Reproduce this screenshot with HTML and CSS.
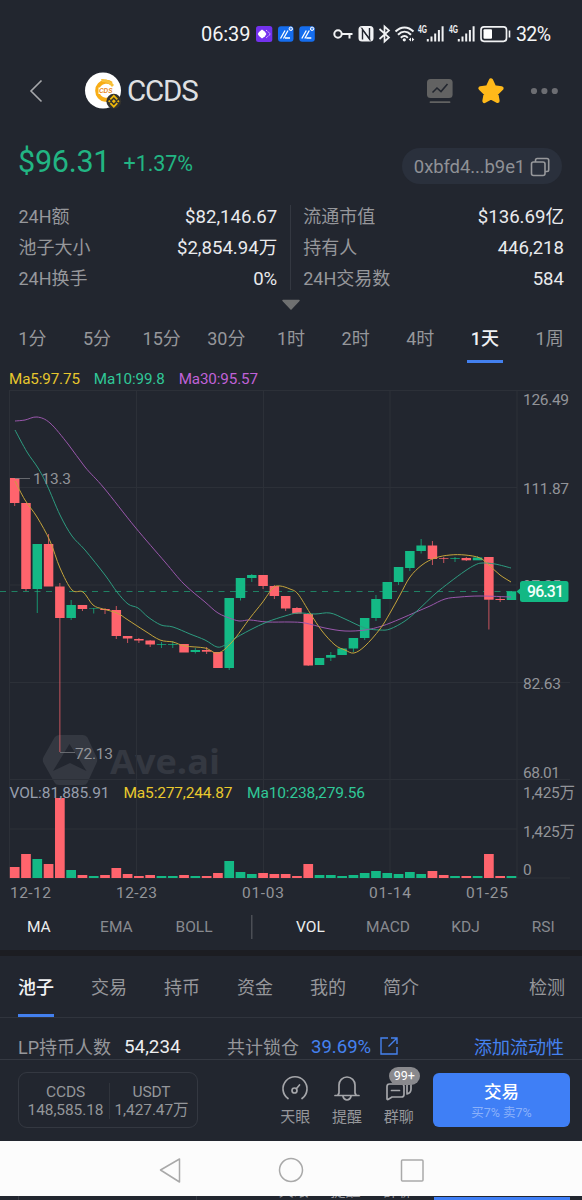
FILE: index.html
```html
<!DOCTYPE html>
<html lang="zh-CN">
<head>
<meta charset="utf-8">
<title>CCDS</title>
<link rel="stylesheet" href="styles.css">
</head>
<body>
<div class="phone">
  <div class="status">
    <span class="clock">06:39</span>
    <svg class="app-icons" width="60" height="18" viewBox="256 25 60 18">
      <rect x="256" y="26" width="16.3" height="16" rx="2.5" fill="#7432ee"/>
      <path d="M262 29.5l3 2.2 1.4 2.3-1.4 2.3-3 2.2-3-2.4-1.2-2.1 1.2-2.1z" fill="#fff"/>
      <path d="M266 30l4.500 4-4.500 4" fill="none" stroke="#d9c4ff" stroke-width="1" stroke-dasharray="1.500 .7"/>
      <g id="trade">
        <rect x="278" y="26.300" width="15.500" height="15.500" rx="3" fill="#156dee"/>
        <path d="M280.500 38.500l4.500-8M283.500 38.500l4.500-8M285 38h5" stroke="#fff" stroke-width="1.300" fill="none"/>
        <circle cx="290.800" cy="28.800" r="1.700" fill="#4c8cf0" stroke="#fff" stroke-width="1"/>
      </g>
      <use href="#trade" x="21.300"/>
    </svg>
    <svg class="sys-icons" width="178" height="20" viewBox="333 24 178 20" fill="none" stroke="#f1f2f4">
      <circle cx="338" cy="34" r="3.700" stroke-width="2"/>
      <path d="M342 34h10.500M349.500 34v4.500" stroke-width="2"/>
      <rect x="358.500" y="26" width="15" height="15.500" rx="3.500" fill="#f1f2f4" stroke="none"/>
      <path d="M362.500 39.500V29.500l7 9.500V28" stroke="#22262f" stroke-width="1.400"/>
      <path d="M361 27.500l9.500 13" stroke="#22262f" stroke-width=".8"/>
      <path d="M379.500 29l9.500 8.500-4.500 4V26.500l4.500 4-9.500 8.500" stroke-width="1.700"/>
      <path d="M395.500 31.500c5.500-5.500 12.500-5.500 18 0M398 34.800c4-4 9-4 13 0M400.800 37.800c2.500-2.300 5-2.300 7 0" stroke-width="2"/>
      <circle cx="404.300" cy="39.800" r="1.600" fill="#f1f2f4" stroke="none"/>
      <path d="M411 37.500l-2.300 2 2.300 2zM412 37.500l2.300 2-2.300 2z" fill="#f1f2f4" stroke="none"/>
      <g id="signal">
        <text x="418" y="33.400" class="net" textLength="9" lengthAdjust="spacingAndGlyphs">4G</text>
        <path d="M427.800 39v2.400M431.500 36.500v4.900M435.200 33.500v7.900M438.900 30v11.400M442.600 26.300v15.100" stroke-width="2"/>
      </g>
      <use href="#signal" x="31"/>
      <rect x="481" y="26.800" width="25.500" height="14.500" rx="3" stroke-width="1.700"/>
      <rect x="483.500" y="29.300" width="8.500" height="9.500" rx="1" fill="#fff" stroke="none"/>
      <path d="M509.500 30.500v7" stroke-width="1.600"/>
    </svg>
    <span class="battery">32%</span>
  </div>

  <header class="topbar">
    <svg class="back" width="14" height="24" viewBox="0 0 14 24"><path d="M12.500 1.500L2 12l10.500 10.500" fill="none" stroke="#a6a7ab" stroke-width="1.600"/></svg>
    <svg class="coin" width="38" height="38" viewBox="84 72 38 38">
      <circle cx="103" cy="90.500" r="18" fill="#fff"/>
      <path d="M111.500 83.500a9 9 0 1 0 0 14.500" fill="none" stroke="#f8ad16" stroke-width="4"/>
      <path d="M101 79c5 0 9 1 13 6l-2 2c-3-4-6-5-10-5z" fill="#f8c13a"/>
      <rect x="98.500" y="87.500" width="15" height="6.500" fill="#fff"/>
      <text x="99" y="93.300" class="coin-text" textLength="13.500" lengthAdjust="spacingAndGlyphs">CDS</text>
      <circle cx="113.800" cy="101.200" r="7.400" fill="#35342f"/>
      <path d="M110.300 99.300l3.500-3.500 3.500 3.500M110.300 103.200l3.500 3.500 3.500-3.500" fill="none" stroke="#f0b90b" stroke-width="1.700"/>
      <path d="M113.800 99.300l2 2-2 2-2-2zM109.300 100l1.300 1.300-1.300 1.300-1.300-1.300zM118.300 100l1.300 1.300-1.300 1.300-1.300-1.300z" fill="#f0b90b"/>
    </svg>
    <h1 class="name">CCDS</h1>
    <svg class="actions" width="134" height="28" viewBox="426 77 134 28">
      <rect x="427" y="79" width="25.600" height="19" rx="3.500" fill="#626262"/>
      <path d="M432.500 92.500l4.500-4.500 4 3.500 6.500-7.500" fill="none" stroke="#22262f" stroke-width="1.600"/>
      <path d="M430.500 102.200h19" stroke="#626262" stroke-width="1.800" stroke-linecap="round"/>
      <path d="M491 80.500l3.200 6.800 7.300 1-5.300 5.200 1.300 7.400-6.500-3.500-6.500 3.500 1.300-7.400-5.300-5.200 7.300-1z" fill="#ffb91a" stroke="#ffb91a" stroke-width="4.300" stroke-linejoin="round"/>
      <g fill="#6c6d72"><circle cx="534" cy="91" r="3.100"/><circle cx="544.400" cy="91" r="3.100"/><circle cx="554.800" cy="91" r="3.100"/></g>
    </svg>
  </header>

  <section class="quote">
    <span class="price">$96.31</span><span class="change">+1.37%</span>
    <div class="address"><span>0xbfd4...b9e1</span>
      <svg width="20" height="20" viewBox="0 0 20 20" fill="none" stroke="#97989b" stroke-width="1.600"><rect x="1.500" y="5" width="13.500" height="13.500" rx="2"/><path d="M5.500 5V3.200q0-1.700 1.700-1.700h9.800q1.700 0 1.700 1.700v9.600q0 1.700-1.700 1.700h-2"/></svg>
    </div>
  </section>

  <section class="stats">
    <dl class="col">
      <dt>24H额</dt><dd>$82,146.67</dd>
      <dt>池子大小</dt><dd>$2,854.94万</dd>
      <dt>24H换手</dt><dd>0%</dd>
    </dl>
    <dl class="col col-right">
      <dt>流通市值</dt><dd>$136.69亿</dd>
      <dt>持有人</dt><dd>446,218</dd>
      <dt>24H交易数</dt><dd>584</dd>
    </dl>
  </section>
  <div class="expand"><svg width="20" height="12" viewBox="0 0 20 12"><path d="M2 1.500h16L10 10z" fill="#6f7071" stroke="#6f7071" stroke-width="1.500" stroke-linejoin="round"/></svg></div>

  <nav class="frames">
    <span>1分</span><span>5分</span><span>15分</span><span>30分</span><span>1时</span><span>2时</span><span>4时</span><span class="on">1天</span><span>1周</span>
  </nav>

  <div class="legend"><span class="ma5">Ma5:97.75</span><span class="ma10">Ma10:99.8</span><span class="ma30">Ma30:95.57</span></div>

  <svg class="chart" width="582" height="515" viewBox="0 388 582 515">
    <g class="watermark">
      <path d="M59 735h24q3 0 4.500 2.500l9 19.500q1.500 3 0 6l-9 19.500q-1.500 2.500-4.500 2.500h-24q-3 0-4.500-2.500l-11-19.500q-1.500-3 0-6l11-19.500q1.500-2.500 4.500-2.500z"/>
      <path d="M69.500 744l17 27-16.500-8-17 8z" class="cut"/>
      <text x="110" y="774" textLength="110" lengthAdjust="spacingAndGlyphs">Ave.ai</text>
    </g>
    <g class="grid">
      <path d="M9 390.500h561M9 487.500h508M9 585h508M9 682.500h561M9 779.500h561M9 829h508M9 878h561"/>
      <path d="M9.500 390v488M136.500 390v488M263.500 390v488M390 390v488M517 390v488"/>
    </g>
    <path d="M0 591.500h519" class="last-line"/>
    <g id="candles"></g>
    <g id="volumes"></g>
    <g id="averages"></g>
    <path d="M15 478.500h15M60 752.500h15" class="mark-line"/>
    <g class="axis">
      <text x="33" y="484" textLength="38">113.3</text>
      <text x="75" y="759" textLength="38">72.13</text>
      <text x="523" y="405" textLength="46">126.49</text>
      <text x="523" y="493.500" textLength="46">111.87</text>
      <text x="523" y="590.500" textLength="38">97.25</text>
      <text x="523" y="689" textLength="38">82.63</text>
      <text x="523" y="777.500" textLength="37">68.01</text>
      <text x="523" y="798" textLength="52">1,425万</text>
      <text x="523" y="836.500" textLength="52">1,425万</text>
      <text x="523" y="875">0</text>
      <text x="10" y="897.500" textLength="41">12-12</text>
      <text x="116" y="897.500" textLength="41">12-23</text>
      <text x="242" y="897.500" textLength="42">01-03</text>
      <text x="369" y="897.500" textLength="42">01-14</text>
      <text x="466" y="897.500" textLength="42">01-25</text>
    </g>
    <g class="vol-legend">
      <text x="9.500" y="797.500" textLength="100" class="c-vol">VOL:81,885.91</text>
      <text x="123.500" y="797.500" textLength="109" class="c5">Ma5:277,244.87</text>
      <text x="247" y="797.500" textLength="118" class="c10">Ma10:238,279.56</text>
    </g>
    <path d="M516.500 591.500l3.500-3v-5q0-2.500 2.500-2.500h43.500q2.500 0 2.500 2.500v16q0 2.500-2.500 2.500h-43.500q-2.500 0-2.500-2.500v-5z" fill="#13b884"/>
    <text x="527" y="596.500" class="tag" textLength="37">96.31</text>
  </svg>

  <nav class="indicators">
    <span class="on">MA</span><span>EMA</span><span>BOLL</span><i></i><span class="on">VOL</span><span>MACD</span><span>KDJ</span><span>RSI</span>
  </nav>

  <nav class="tabs">
    <span class="on">池子</span><span>交易</span><span>持币</span><span>资金</span><span>我的</span><span>简介</span><span class="last">检测</span>
  </nav>

  <section class="pool">
    <span>LP持币人数</span><b class="holders">54,234</b><span class="lock">共计锁仓</span><a class="pct">39.69%</a>
    <svg class="ext" width="18" height="18" viewBox="0 0 18 18" fill="none" stroke="#4582ef" stroke-width="1.400"><path d="M8 1H1v16h16v-7M11 1h6v6M17 1L8.500 9.500"/></svg>
    <a class="add">添加流动性</a>
  </section>

  <footer class="bottom">
    <div class="pair">
      <div class="side"><span>CCDS</span><span>148,585.18</span></div>
      <div class="side"><span>USDT</span><span>1,427.47万</span></div>
    </div>
    <div class="tools">
      <div class="tool">
        <svg width="28" height="28" viewBox="0 0 28 28"><path d="M7 24.500a12 12 0 1 1 14 0M15.300 14.700l3.200-3.700"/><circle cx="13.500" cy="16.500" r="2.500"/></svg>
        <span>天眼</span>
      </div>
      <div class="tool">
        <svg width="28" height="28" viewBox="0 0 28 28"><path d="M2 21.500h24M5 21l1-2V11a8 8 0 0 1 16 0v8l1 2M10 22.500q1 3.500 4 3.500t4-3.500"/></svg>
        <span>提醒</span>
      </div>
      <div class="tool">
        <svg width="28" height="28" viewBox="0 0 28 28"><path d="M4.500 10h12q2.500 0 2.500 2.500v8q0 2.500-2.500 2.500H7l-4 2.500q-1 .3-1-1V12.500Q2 10 4.500 10zM6.500 16.500h8M22 20q4-1 4-5v-5M22 19v-9"/></svg>
        <span>群聊</span><em class="badge">99+</em>
      </div>
    </div>
    <div class="trade"><strong>交易</strong><small>买7% 卖7%</small></div>
  </footer>

  <div class="sysnav">
    <svg width="266" height="26" viewBox="158 1157 266 26" fill="none" stroke="#a9a9a9" stroke-width="1.500" stroke-linejoin="round"><path d="M160.500 1170l19-11v23z"/><circle cx="291" cy="1170" r="11.500"/><rect x="401.500" y="1160" width="21.500" height="21" rx="1"/></svg>
  </div>
  <div class="under"><div class="under-box"></div><span>天眼</span><span>提醒</span><span>群聊</span><div class="under-btn"></div></div>
</div>
<script src="chart.js"></script>
</body>
</html>
```
FILE: styles.css
```css
* { box-sizing: border-box; margin: 0; padding: 0; }
body { background: #22262f; font-family: Roboto, "Noto Sans CJK SC", sans-serif; color: #96979b; font-size: 18px; }
.phone { width: 582px; height: 1200px; overflow: hidden; display: flex; flex-direction: column; }
.phone > * { flex: none; }

.status { height: 68px; padding-left: 201px; display: flex; align-items: center; color: #f4f5f6; }
.clock { font-size: 20px; letter-spacing: -.1px; width: 55px; }
.sys-icons { margin-left: 17px; }
.battery { font-size: 19.500px; margin-left: 5px; letter-spacing: -.6px; }
.net { font: bold 10px "Liberation Sans", sans-serif; fill: #f1f2f4; stroke: none; }

.topbar { height: 46px; padding: 0 22px 0 29px; display: flex; align-items: center; }
.coin { margin-left: 41px; }
.coin-text { font: italic bold 6.500px "Liberation Sans", sans-serif; fill: #e98a1d; }
.name { font-size: 29.500px; font-weight: 400; color: #dfe0e2; letter-spacing: -1.200px; margin-left: 5px; line-height: 30px; padding-bottom: 1px; }
.actions { margin-left: auto; }

.quote { height: 91px; padding: 34px 20px 0 18px; display: flex; align-items: flex-start; color: #22b583; }
.price { font-size: 30.500px; line-height: 28px; letter-spacing: -.25px; width: 105.500px; }
.change { font-size: 21.500px; line-height: 32px; letter-spacing: -.05px; }
.address { margin-left: auto; width: 160px; height: 36px; border-radius: 18px; background: #2a303c; color: #8f9196; display: flex; align-items: center; justify-content: center; gap: 5px; font-size: 18.500px; letter-spacing: -.1px; padding-top: 2px; }

.stats { height: 85px; padding: 0 18px 0 18.500px; display: flex; }
.col { width: 273px; padding-right: 13px; border-right: 1px solid #343841; display: grid; grid-template-columns: auto auto; grid-template-rows: repeat(3, 31px); align-content: start; line-height: 24px; }
.col-right { border: 0; padding: 0 0 0 12px; }
.col dd { text-align: right; color: #e9eaed; font-size: 18.600px; }
.expand { height: 24px; display: flex; justify-content: center; align-items: flex-start; padding-top: 9px; }

.frames { height: 50px; display: grid; grid-template-columns: repeat(9, 1fr); justify-items: center; }
.frames span { line-height: 50px; height: 49px; border-bottom: 3px solid transparent; }
.frames .on { color: #f0f1f3; border-color: #4380ef; min-width: 36px; text-align: center; font-weight: 500; }

.legend { height: 24px; padding: 4px 9px 0; display: flex; gap: 14px; font-size: 15.200px; line-height: 22px; letter-spacing: -.12px; }
.ma5 { color: #e7c62d; } .ma10 { color: #30c898; } .ma30 { color: #c062d8; }

.chart { display: block; }
.watermark { fill: #343841; }
.watermark .cut { fill: #22262f; }
.watermark text { font: bold 34px "Open Sans", sans-serif; }
.grid { stroke: #2c3038; fill: none; }
.last-line { stroke: #1f8063; stroke-dasharray: 6 5.500; }
.mark-line { stroke: #777a7f; stroke-width: .8; }
.axis text, .vol-legend text { font-size: 15.500px; fill: #929499; }
.vol-legend .c-vol { fill: #979ead; }
.vol-legend .c5 { fill: #e9c92d; }
.vol-legend .c10 { fill: #30c898; }
.tag { font-size: 15.800px; font-weight: 500; fill: #f3fffb; }
.up { fill: #14b985; stroke: #14b985; }
.down { fill: #ff646d; stroke: #ff646d; }
.bar { stroke: none; }
.wick { stroke-width: 1; opacity: .75; }
.line { fill: none; stroke-width: 1; }
.line-5 { stroke: #c5a43b; } .line-10 { stroke: #2d9c80; } .line-30 { stroke: #9a57ac; }

.indicators { height: 53px; border-bottom: 6px solid #1c1d22; display: flex; align-items: center; font-size: 15.500px; color: #888a8f; }
.indicators span { flex: 2; text-align: center; }
.indicators i { flex: 1; height: 24px; background: linear-gradient(#4b4e55, #4b4e55) center / 1.500px 100% no-repeat; }
.indicators .on { color: #eceded; }

.tabs { height: 62px; padding: 0 17px 0 18px; border-bottom: 1px solid #30343d; display: flex; gap: 37px; }
.tabs span { width: 36px; line-height: 64px; height: 61px; white-space: nowrap; border-bottom: 3px solid transparent; }
.tabs .on { color: #f2f3f4; font-weight: 500; border-color: #4380ef; }
.tabs .last { margin-left: auto; }

.pool { height: 41px; padding: 0 18px; display: flex; line-height: 59px; white-space: nowrap; }
.holders { width: 103px; margin-left: 13px; font-weight: 400; font-size: 18.800px; color: #edeef0; }
.lock { width: 84px; }
.pct { width: 69px; color: #4582ef; font-size: 18.500px; }
.ext { margin-top: 19px; }
.add { margin-left: auto; color: #4582ef; }

.bottom { height: 82px; border-top: 1px solid #353942; padding: 12px 12px 0 18px; display: flex; }
.pair { width: 180px; height: 56px; border: 1px solid #343841; border-radius: 9px; display: flex; padding-top: 10px; }
.side { width: 90px; display: flex; flex-direction: column; align-items: center; font-size: 15.500px; line-height: 18px; color: #94969a; white-space: nowrap; letter-spacing: -.1px; height: 36px; padding-left: 3px; }
.side + .side { width: 88px; border-left: 1px solid #30343c; padding: 0 4px 0 0; }
.tools { display: flex; margin-left: 71.500px; }
.tool { width: 51.700px; display: flex; flex-direction: column; align-items: center; position: relative; font-size: 15px; line-height: 31px; }
.tool svg { fill: none; stroke: #a5a6aa; stroke-width: 1.700; stroke-linecap: round; stroke-linejoin: round; margin-top: 2px; }
.badge { position: absolute; left: 16px; top: -5px; width: 31px; height: 18px; border-radius: 9px; background: #89898d; color: #fff; font: 12.500px/18px Roboto, sans-serif; text-align: center; }
.trade { margin: 1px 0 0 auto; width: 137px; height: 54px; border-radius: 6px; background: #3f7ff6; color: #fff; display: flex; flex-direction: column; align-items: center; padding-top: 8px; }
.trade strong { font-size: 17.500px; font-weight: 500; line-height: 22px; }
.trade small { font-size: 12.500px; line-height: 19px; color: #8bb1fa; }

.sysnav { height: 55px; background: #fcfcfc; padding: 16px 0 0 158px; }
.under { height: 4px; overflow: hidden; display: flex; padding-left: 18px; font-size: 15px; line-height: 22px; }
.under-box { width: 180px; border: solid #343841; border-width: 0 1px; margin-right: 82px; }
.under span { width: 52px; margin-top: -16px; }
.under-btn { margin: 1px 12px 0 auto; width: 137px; background: #3f7ff6; }
```
FILE: chart.js
```javascript
const NS = "http://www.w3.org/2000/svg";
const STEP = 11.290, FIRST = 14.700, BASE = 878;

// direction, body top, body bottom, wick top, wick bottom, volume top
const bars = [
  ["d",478,503,478,506,867],["d",503,589,503,591,854],["u",544,589,544,613,859],["d",544,586.5,534,586,864],
  ["d",586.5,618,583,752,798],["u",605,618,600,620,870],["d",605,609,605,611,875],["u",608.5,609,608,613.5,876],
  ["d",609,610,608,614,875],["d",610,636,606,639,868],["d",636,638.5,636,643,874],["d",639,640.5,638,643,876],
  ["d",640.5,644.5,640,647,875],["u",644,644.7,642,648,876],["u",644,644.7,641,648,876],["d",644,652.5,644,652,875],
  ["u",650,652,648,653.5,876],["d",650,651.7,647,654,876],["d",652,668,652,668,873],["u",598,668,598,670,861],
  ["u",578,598,578,600.5,872],["u",575,578,574,582,874],["d",575,586,575,589,873],["d",586,596,585,599,874],
  ["d",596,608.5,596,611,874],["d",608,613.5,607,614,876],["d",614,665.5,613,666,864],["u",658,665,658,665,875],
  ["u",655,657.7,652,661,875],["u",648.5,655,648,655,876],["u",638,648.5,638,652,875],["u",618,638,618,640,873],
  ["u",599,618,595,621,871],["u",582,599,582,599,873],["u",567,582,567,585,874],["u",551,568,551,571,872],
  ["u",545.5,551,539,553.5,874],["d",545.5,559,541,565,871],["d",558.3,559,557,563,875],["u",558.3,559,557,562,876],
  ["d",558,560.3,557,561,876],["u",557.5,560.3,556,560,876],["d",557,599.7,557,629.5,854],["d",599,600,597,602,876],
  ["u",591.3,600,591,600,876]
];

const averages = {
  "line-30": [15,421,25,420,37,417,50,423,68,444,85,467,104,488,135,527,165,562,184,584,205,602,218,613,232,619,240,621,250,620,267,622,290,622,305,623,325,628,345,631,365,630,382,626,400,619,416,612,430,606,445,599,460,597,480,596,511,597],
  "line-10": [15,430,27,452,38,468,47,485,60,515,72,536,85,550,105,575,117,592,128,604,138,608,148,617,161,625,173,627,190,634,205,640,217,647,225,645,232,640,250,630,267,622,285,616,298,613,315,614,330,613,345,619,365,628,380,630,390,629,405,621,418,610,435,594,450,582,465,571,475,565,482,563,495,564,511,568],
  "line-5": [15,481,25,500,37,517,50,541,60,568,72,590,83,592,93,605,103,609,117,613,128,620,145,631,160,640,173,642,185,646,205,648,218,653,232,642,250,618,262,603,273,588,280,586,290,589,298,594,310,613,322,631,335,645,345,650,354,653,365,646,380,629,390,613,400,595,410,577,422,565,435,558,450,555,465,555,480,558,490,566,500,575,511,582]
};

function add(parent, tag, attrs) {
  const el = document.createElementNS(NS, tag);
  for (const key in attrs) el.setAttribute(key, attrs[key]);
  document.getElementById(parent).appendChild(el);
}

bars.forEach(([dir, top, bottom, high, low, vol], i) => {
  const cx = FIRST + STEP * i;
  const tone = dir === "u" ? "up" : "down";
  add("candles", "path", { d: `M${cx} ${high}V${low}`, class: `${tone} wick` });
  add("candles", "rect", { x: cx - 4.750, y: top, width: 9.500, height: bottom - top, class: `${tone} bar` });
  add("volumes", "rect", { x: cx - 4.850, y: vol, width: 9.700, height: BASE - vol, class: `${tone} bar` });
});

// Catmull-Rom spline through the sampled points
for (const name in averages) {
  const flat = averages[name], p = [];
  for (let i = 0; i < flat.length; i += 2) p.push([flat[i], flat[i + 1]]);
  let d = `M${p[0]}`;
  for (let i = 0; i < p.length - 1; i++) {
    const a = p[i - 1] || p[i], b = p[i], c = p[i + 1], e = p[i + 2] || c;
    d += `C${b[0] + (c[0] - a[0]) / 6} ${b[1] + (c[1] - a[1]) / 6} ${c[0] - (e[0] - b[0]) / 6} ${c[1] - (e[1] - b[1]) / 6} ${c[0]} ${c[1]}`;
  }
  add("averages", "path", { d, class: `line ${name}` });
}
```
